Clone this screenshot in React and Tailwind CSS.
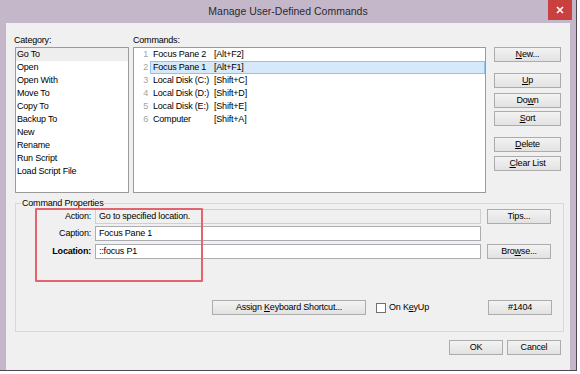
import React from 'react';

const categories = [
  'Go To', 'Open', 'Open With', 'Move To', 'Copy To',
  'Backup To', 'New', 'Rename', 'Run Script', 'Load Script File',
];

const commands = [
  { name: 'Focus Pane 2', key: '[Alt+F2]' },
  { name: 'Focus Pane 1', key: '[Alt+F1]', selected: true },
  { name: 'Local Disk (C:)', key: '[Shift+C]' },
  { name: 'Local Disk (D:)', key: '[Shift+D]' },
  { name: 'Local Disk (E:)', key: '[Shift+E]' },
  { name: 'Computer', key: '[Shift+A]' },
];

// Win8 style push button
const Btn = ({ children, className = '' }) => (
  <div
    className={`flex items-center justify-center h-[15px] border border-[#acacac] bg-gradient-to-b from-[#f3f3f3] to-[#e2e2e2] text-black leading-none ${className}`}
  >
    <span>{children}</span>
  </div>
);

const U = ({ children }) => <span className="underline underline-offset-[1px]">{children}</span>;

export default function App() {
  return (
    <div className="relative w-[580px] h-[374px] bg-white overflow-hidden font-['Liberation_Sans',Arial,sans-serif] text-[9px] tracking-[-0.2px] text-black">
      {/* window frame */}
      <div className="w-[577px] h-[371px] bg-[#c5b7ca] border-r border-b border-[#4f4753] flex flex-col">
        {/* title bar */}
        <div className="relative h-[23px] flex items-center justify-center shrink-0">
          <span className="text-[10.5px] tracking-normal text-[#2b2b2b] pt-[1px]">Manage User-Defined Commands</span>
          <div className="absolute right-[4px] top-0 w-[24px] h-[20px] bg-[#c9413f] flex items-center justify-center">
            <svg width="8" height="8" viewBox="0 0 8 8">
              <path d="M1 1L7 7M7 1L1 7" stroke="white" strokeWidth="1.6" />
            </svg>
          </div>
        </div>

        {/* client area */}
        <div className="mx-[6px] flex-1 bg-[#f0f0f0] flex flex-col">
          {/* lists + buttons */}
          <div className="flex pl-[9px] pt-[11px]">
            <div className="w-[114px]">
              <div className="h-[13px] leading-[13px] -ml-[1px]">Category:</div>
              <div className="h-[146px] border border-[#9b9b9b] bg-white">
                {categories.map((c, i) => (
                  <div
                    key={c}
                    className={`h-[13px] leading-[13px] pl-[1px] ${i === 0 ? 'bg-[#eeeeee]' : ''}`}
                  >
                    {c}
                  </div>
                ))}
              </div>
            </div>

            <div className="w-[353px] ml-[4px]">
              <div className="h-[13px] leading-[13px]">Commands:</div>
              <div className="h-[146px] border border-[#9b9b9b] bg-white">
                {commands.map((c, i) => (
                  <div key={c.name} className="flex h-[13px]">
                    <div className="w-[16px] pr-[2px] text-right leading-[13px] text-[#a3a3a3]">{i + 1}</div>
                    <div
                      className={`flex-1 flex leading-[11px] border ${
                        c.selected ? 'bg-[#d5e9fa] border-[#8fc3ec]' : 'border-transparent'
                      }`}
                    >
                      <span className="w-[63px] pl-[2px] shrink-0">{c.name}</span>
                      <span>{c.key}</span>
                    </div>
                  </div>
                ))}
              </div>
            </div>

            <div className="w-[67px] ml-[8px] pt-[13px] flex flex-col">
              <Btn><U>N</U>ew...</Btn>
              <Btn className="mt-[11px]"><U>U</U>p</Btn>
              <Btn className="mt-[5px]">Do<U>w</U>n</Btn>
              <Btn className="mt-[3px]"><U>S</U>ort</Btn>
              <Btn className="mt-[11px]"><U>D</U>elete</Btn>
              <Btn className="mt-[4px]"><U>C</U>lear List</Btn>
            </div>
          </div>

          {/* command properties group */}
          <div className="ml-[9px] mt-[10px] w-[549px] h-[129px] border border-[#d8d8d8] flex flex-col">
            <div className="-mt-[7px] ml-[5px] px-[1px] w-fit bg-[#f0f0f0] h-[13px] leading-[13px]">
              Command Properties
            </div>

            <div className="flex items-center mt-[-1px]">
              <div className="w-[79px] pr-[4px] text-right">Action:</div>
              <div className="w-[386px] h-[15px] border border-[#cfcfcf] bg-[#f0f0f0] pl-[3px] leading-[13px]">
                Go to specified location.
              </div>
              <Btn className="w-[64px] ml-[6px]">Tips...</Btn>
            </div>

            <div className="flex items-center mt-[2px]">
              <div className="w-[79px] pr-[4px] text-right">Caption:</div>
              <div className="w-[386px] h-[15px] border border-[#abadb3] bg-white pl-[3px] leading-[13px]">
                Focus Pane 1
              </div>
            </div>

            <div className="flex items-center mt-[3px]">
              <div className="w-[79px] pr-[4px] text-right font-bold">Location:</div>
              <div className="w-[386px] h-[15px] border border-[#abadb3] bg-white pl-[3px] leading-[13px]">
                ::focus P1
              </div>
              <Btn className="w-[64px] ml-[6px]">Bro<U>w</U>se...</Btn>
            </div>

            <div className="flex items-center mt-[41px]">
              <Btn className="w-[154px] ml-[196px]">Assign <U>K</U>eyboard Shortcut...</Btn>
              <div className="ml-[10px] w-[10px] h-[10px] border border-[#707070] bg-white" />
              <span className="ml-[3px]">On K<U>e</U>yUp</span>
              <Btn className="w-[64px] ml-auto mr-[11px]">#1404</Btn>
            </div>
          </div>

          {/* OK / Cancel */}
          <div className="flex justify-end gap-[4px] mt-[8px] mr-[9px]">
            <Btn className="w-[54px] border-[#5b9fe0] from-[#eef4fa] to-[#dfe9f3]">OK</Btn>
            <Btn className="w-[54px]">Cancel</Btn>
          </div>
        </div>
      </div>

      {/* red annotation box */}
      <div className="absolute left-[35px] top-[208px] w-[168px] h-[74px] border-2 border-[#e2646e] rounded-[1px]" />
    </div>
  );
}
